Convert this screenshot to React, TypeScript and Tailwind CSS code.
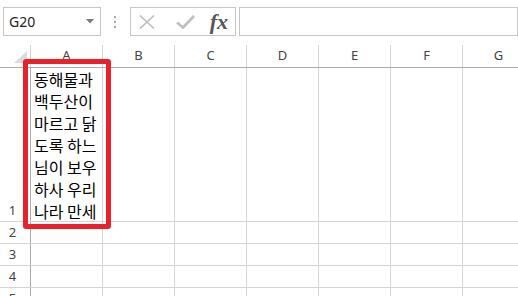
const cols = ['A', 'B', 'C', 'D', 'E', 'F', 'G'];

const lines = ['동해물과', '백두산이', '마르고 닭', '도록 하느', '님이 보우', '하사 우리', '나라 만세'];

const cell = 'w-[72px] shrink-0 border-r border-[#d4d4d4]';

const Toolbar = () => (
  <div className="flex h-[45px] items-start pt-[7px]">
    <div className="ml-[3px] flex h-[29px] w-[101px] items-center justify-between border border-[#c6c6c6] pl-[5px] pr-[6px]">
      <span className="text-[14px] text-[#222]">G20</span>
      <svg width="8" height="5" viewBox="0 0 8 5">
        <path d="M0 0 L8 0 L4 4.5 Z" fill="#7a7a7a" />
      </svg>
    </div>
    <div className="flex h-[29px] w-[30px] flex-col items-center justify-center gap-[3px]">
      <span className="h-[2px] w-[2px] bg-[#a8a8a8]" />
      <span className="h-[2px] w-[2px] bg-[#a8a8a8]" />
      <span className="h-[2px] w-[2px] bg-[#a8a8a8]" />
    </div>
    <div className="flex h-[29px] w-[110px] items-center border border-[#c6c6c6]">
      <svg className="ml-[8px]" width="16" height="14" viewBox="0 0 16 14">
        <path d="M1 0.5 L15 13.5 M15 0.5 L1 13.5" stroke="#bdbdbd" strokeWidth="1.6" />
      </svg>
      <svg className="ml-[21px]" width="19" height="14" viewBox="0 0 19 14">
        <path d="M1 7.5 L7 12.5 L18 1" stroke="#c0c0c0" strokeWidth="2.8" fill="none" />
      </svg>
      <span className="ml-[15px] font-['Liberation_Serif',serif] text-[22px] font-bold italic leading-none text-[#555]">
        fx
      </span>
    </div>
    <div className="ml-[3px] h-[29px] w-[290px] border border-[#c6c6c6]" />
  </div>
);

const Header = () => (
  <div className="flex h-[23px] border-b border-[#ababab]">
    <div className="relative w-[31px] shrink-0 border-r border-[#d4d4d4]">
      <svg className="absolute left-[14px] top-[6px]" width="13" height="12" viewBox="0 0 13 12">
        <path d="M13 0 L13 12 L0 12 Z" fill="#dcdcdc" />
      </svg>
    </div>
    {cols.map((c) => (
      <div key={c} className={`${cell} flex items-center justify-center text-[13px] text-[#444]`}>
        {c}
      </div>
    ))}
  </div>
);

const Row = ({ n, tall }: { n: number; tall?: boolean }) => (
  <div className={`flex border-b border-[#d4d4d4] ${tall ? 'h-[154px]' : 'h-[22px]'}`}>
    <div className="flex w-[31px] shrink-0 items-end justify-center border-r border-[#ababab] pr-[5px] pb-[1px] text-[13px] leading-[20px] text-[#444]">
      {n}
    </div>
    {cols.map((c) => (
      <div key={c} className={cell}>
        {tall && c === 'A' && (
          <div className="pl-[3px] font-['Noto_Sans_CJK_KR',sans-serif] text-[16px] leading-[22px] whitespace-nowrap text-black">
            {lines.map((l) => (
              <div key={l}>{l}</div>
            ))}
          </div>
        )}
      </div>
    ))}
  </div>
);

export default function App() {
  return (
    <div className="relative h-[296px] w-[518px] overflow-hidden bg-white font-['Noto_Sans',sans-serif]">
      <Toolbar />
      <Header />
      <Row n={1} tall />
      <Row n={2} />
      <Row n={3} />
      <Row n={4} />
      <Row n={5} />
      <div className="absolute left-[23px] top-[59px] h-[170px] w-[88px] rounded-[3px] border-[5px] border-[#e8222b]" />
    </div>
  );
}
